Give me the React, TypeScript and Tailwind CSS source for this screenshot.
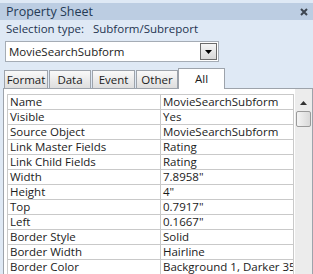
import React from "react";

const rows: [string, string][] = [
  ["Name", "MovieSearchSubform"],
  ["Visible", "Yes"],
  ["Source Object", "MovieSearchSubform"],
  ["Link Master Fields", "Rating"],
  ["Link Child Fields", "Rating"],
  ["Width", "7.8958\""],
  ["Height", "4\""],
  ["Top", "0.7917\""],
  ["Left", "0.1667\""],
  ["Border Style", "Solid"],
  ["Border Width", "Hairline"],
  ["Border Color", "Background 1, Darker 35%"],
];

const tabs = [
  { label: "Format", w: "w-[44px]" },
  { label: "Data", w: "w-[42px]" },
  { label: "Event", w: "w-[43px]" },
  { label: "Other", w: "w-[42px]" },
];

export default function App() {
  return (
    <div
      className="w-[313px] h-[274px] overflow-hidden bg-[#dfe9f5] flex flex-col text-[11.5px] leading-[14px] text-[#1b1b1b]"
      style={{ fontFamily: '"Open Sans", "Noto Sans", sans-serif' }}
    >
      {/* title bar */}
      <div className="mt-[3px] h-[17px] bg-[#bccde2] flex items-center justify-between pl-[6px] pr-[4px] shrink-0">
        <span className="text-[12.5px] text-[#243a55]">Property Sheet</span>
        <svg width="8" height="8" viewBox="0 0 8 8" className="mr-[1px]">
          <path d="M1 1 L7 7 M7 1 L1 7" stroke="#3d4550" strokeWidth="2" />
        </svg>
      </div>
      {/* selection type */}
      <div className="h-[17px] flex items-center pl-[6px] text-[#1e3450] shrink-0">
        <span>Selection type:</span>
        <span className="ml-[9px]">Subform/Subreport</span>
      </div>
      {/* dropdown */}
      <div className="mt-[4px] ml-[5px] w-[214px] h-[21px] border border-[#a5acb5] bg-white flex items-center justify-between shrink-0">
        <span className="pl-[3px] text-[#1b1b1b]">MovieSearchSubform</span>
        <div className="mr-[1px] w-[17px] h-[17px] border border-[#6b6b6b] bg-gradient-to-b from-[#f6f6f6] to-[#d8d8d8] flex items-center justify-center">
          <svg width="7" height="4" viewBox="0 0 7 4">
            <path d="M0 0 H7 L3.5 4 Z" fill="#000" />
          </svg>
        </div>
      </div>
      {/* tabs */}
      <div className="mt-[5px] pl-[4px] flex items-end h-[21px] shrink-0 relative z-10">
        {tabs.map((t, i) => (
          <div
            key={t.label}
            className={`${t.w} ${i > 0 ? "ml-[1px]" : ""} h-[18px] border border-b-0 border-[#9da3ab] bg-gradient-to-b from-[#f9f9f9] to-[#dedede] flex items-center justify-center text-[#1b1b1b]`}
          >
            {t.label}
          </div>
        ))}
        <div className="w-[47px] h-[21px] border border-b-0 border-[#9da3ab] bg-white flex items-start pt-[3px] justify-center -mb-[1px]">
          All
        </div>
      </div>
      {/* panel */}
      <div className="flex-1 ml-[3px] border-l border-t border-r border-[#9da3ab] bg-white pt-[5px] pl-[3px] flex">
        <div className="w-[287px] border-l border-t border-[#c9c9c9] flex flex-col">
          {rows.map(([k, v]) => (
            <div key={k} className="h-[15px] flex border-b border-[#c9c9c9] shrink-0">
              <div className="w-[153px] border-r border-[#c9c9c9] pl-[2px] whitespace-nowrap overflow-hidden">
                {k}
              </div>
              <div className="w-[133px] border-r border-[#c9c9c9] pl-[2px] whitespace-nowrap overflow-hidden">
                {v}
              </div>
            </div>
          ))}
        </div>
        <div className="w-[18px] ml-[1px] -mt-[5px] pt-[5px] bg-[#ececec] flex flex-col items-center">
          <div className="h-[17px] flex items-center justify-center">
            <svg width="7" height="4" viewBox="0 0 7 4">
              <path d="M3.5 0 L7 4 H0 Z" fill="#333" />
            </svg>
          </div>
          <div className="w-[15px] h-[16px] rounded-[2px] border border-[#9a9a9a] bg-gradient-to-r from-[#f4f4f4] to-[#d9d9d9]" />
        </div>
      </div>
    </div>
  );
}
